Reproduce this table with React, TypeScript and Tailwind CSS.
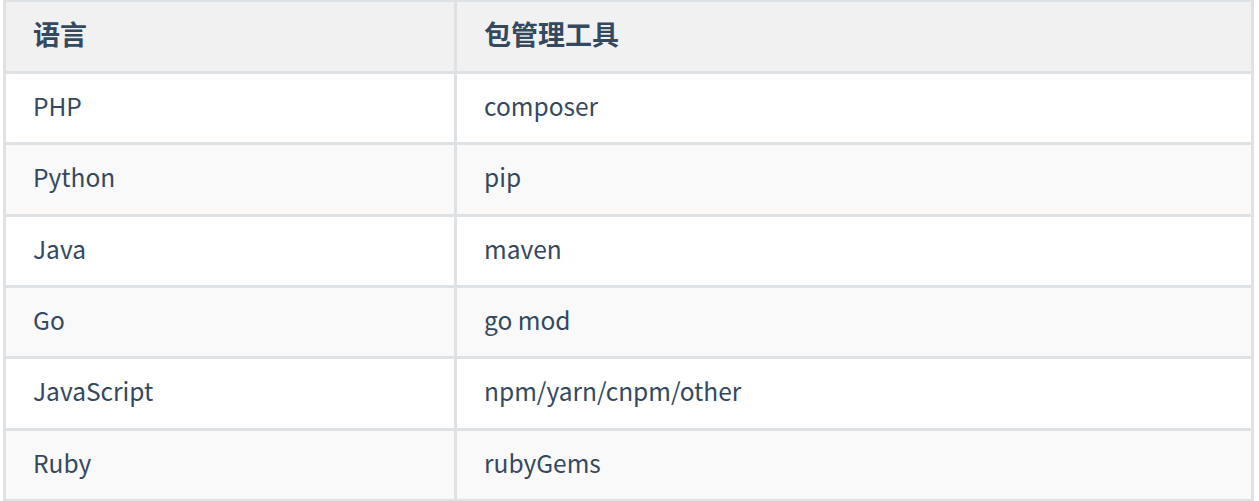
import React from "react";

const rows: [string, string, string][] = [
  ["PHP", "composer", "h-[71px] bg-white"],
  ["Python", "pip", "h-[72px] bg-[#f9f9f9]"],
  ["Java", "maven", "h-[71px] bg-white"],
  ["Go", "go mod", "h-[71px] bg-[#f9f9f9]"],
  ["JavaScript", "npm/yarn/cnpm/other", "h-[72px] bg-white"],
  ["Ruby", "rubyGems", "h-[71px] bg-[#f9f9f9]"],
];

export default function App() {
  return (
    <div
      className="w-[1259px] h-[501px] overflow-hidden bg-white text-[#34495e]"
      style={{ fontFamily: '"Noto Sans CJK SC", "Noto Sans", sans-serif' }}
    >
      <div className="mt-[-1px] ml-[3px] w-[1251px] border-[3px] border-[#dfe2e5]">
        <div className="grid grid-cols-[448px_1fr] h-[69px] bg-[#f1f1f1] text-[27px] font-bold">
          <div className="flex items-center pl-[27px] pb-[4px]">语言</div>
          <div className="flex items-center pl-[27px] pb-[4px] border-l-[3px] border-[#dfe2e5]">包管理工具</div>
        </div>
        {rows.map(([a, b, cls]) => (
          <div
            key={a}
            className={`grid grid-cols-[448px_1fr] border-t-[3px] border-[#dfe2e5] text-[24.5px] ${cls}`}
          >
            <div className="flex items-center pl-[27px] pb-[4px]">{a}</div>
            <div className="flex items-center pl-[27px] pb-[4px] border-l-[3px] border-[#dfe2e5]">{b}</div>
          </div>
        ))}
      </div>
    </div>
  );
}
